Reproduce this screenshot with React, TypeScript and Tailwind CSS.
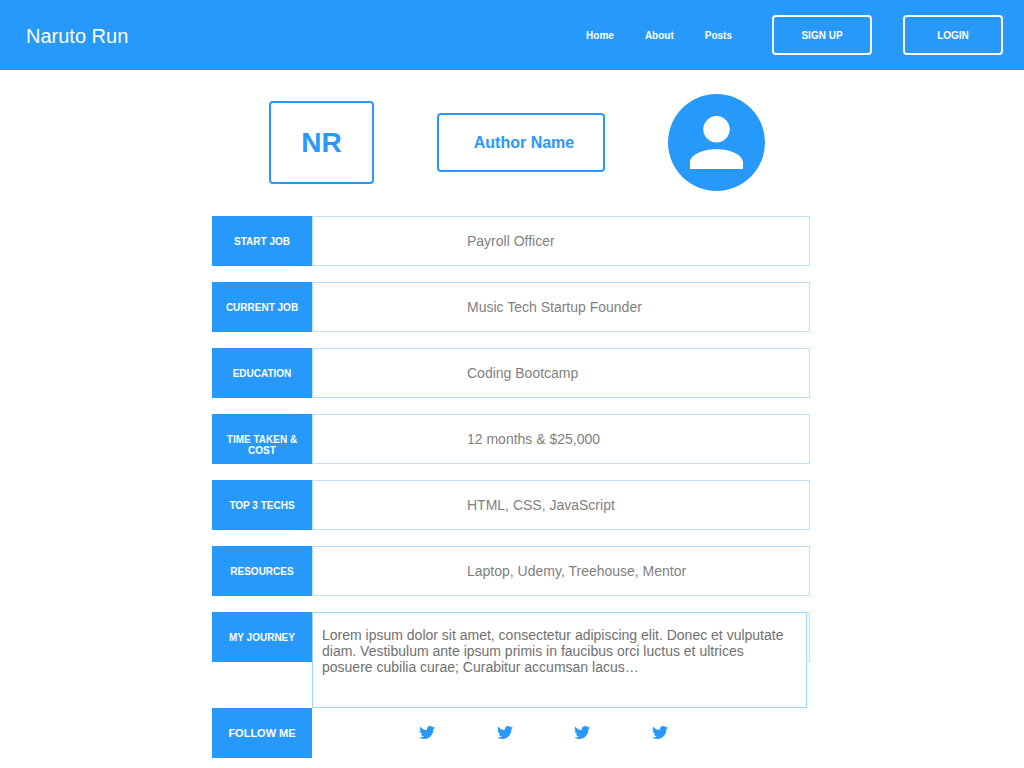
import React from "react";

type Field = { label: string; value: string };

const fields: Field[] = [
  { label: "START JOB", value: "Payroll Officer" },
  { label: "CURRENT JOB", value: "Music Tech Startup Founder" },
  { label: "EDUCATION", value: "Coding Bootcamp" },
  { label: "TIME TAKEN & COST", value: "12 months & $25,000" },
  { label: "TOP 3 TECHS", value: "HTML, CSS, JavaScript" },
  { label: "RESOURCES", value: "Laptop, Udemy, Treehouse, Mentor" },
];

const links = ["Home", "About", "Posts"];

function Header() {
  return (
    <header className="flex h-[70px] items-center justify-between bg-[#2699fb] pr-[21px] pl-[26px] text-white">
      <a href="#" className="pt-0.5 text-xl leading-6">
        Naruto Run
      </a>
      <div className="flex items-center gap-10 text-[10px] leading-3 font-bold">
        <nav className="flex gap-[31px] pt-0.5">
          {links.map((link) => (
            <a key={link} href="#">
              {link}
            </a>
          ))}
        </nav>
        <div className="flex gap-[31px]">
          <button type="button" className="h-10 w-[100px] rounded border-2 border-white pt-0.5">
            SIGN UP
          </button>
          <button type="button" className="h-10 w-[100px] rounded border-2 border-white pt-0.5">
            LOGIN
          </button>
        </div>
      </div>
    </header>
  );
}

function Intro() {
  return (
    <section className="flex items-center gap-[63px] pl-[57px] font-bold text-[#2699fb]">
      <div className="flex h-[83px] w-[105px] items-center justify-center rounded border-2 border-[#2699fb] text-[28px] leading-8">
        NR
      </div>
      <h1 className="flex h-[59px] w-[168px] items-center justify-center rounded border-2 border-[#2699fb] pl-1.5 text-base">
        Author Name
      </h1>
      <div className="flex size-[97px] items-center justify-center rounded-full bg-[#2699fb]">
        <svg viewBox="4 4 16 16" className="size-[53px] fill-white" role="img" aria-label="Author">
          <path d="M12 4a4 4 0 0 1 4 4 4 4 0 0 1-4 4 4 4 0 0 1-4-4 4 4 0 0 1 4-4m0 10c4.42 0 8 1.79 8 4v2H4v-2c0-2.21 3.58-4 8-4z" />
        </svg>
      </div>
    </section>
  );
}

function TwitterIcon() {
  return (
    <svg viewBox="1.5 4 21 17" className="h-[13px] w-4 fill-[#2699fb]" aria-hidden="true">
      <path d="M22.46 6c-.77.35-1.6.58-2.46.69.88-.53 1.56-1.37 1.88-2.38-.83.5-1.75.85-2.72 1.05C18.37 4.5 17.26 4 16 4c-2.35 0-4.27 1.92-4.27 4.29 0 .34.04.67.11.98C8.28 9.09 5.11 7.38 3 4.79c-.37.63-.58 1.37-.58 2.15 0 1.49.75 2.81 1.91 3.56-.71 0-1.37-.2-1.95-.5v.03c0 2.08 1.48 3.82 3.44 4.21a4.22 4.22 0 0 1-1.93.07 4.28 4.28 0 0 0 4 2.98 8.521 8.521 0 0 1-5.33 1.84c-.34 0-.68-.02-1.02-.06C3.44 20.29 5.7 21 8.12 21 16 21 20.33 14.46 20.33 8.79c0-.19 0-.37-.01-.56.84-.6 1.56-1.36 2.14-2.23z" />
    </svg>
  );
}

function Label({ children }: { children: React.ReactNode }) {
  return (
    <dt className="h-[50px] w-[100px] shrink-0 bg-[#2699fb] px-3 pt-5 text-center text-[10px] leading-[11px] font-bold text-white">
      {children}
    </dt>
  );
}

export default function App() {
  return (
    <div className="min-h-screen bg-white font-['Liberation_Sans',Arial,sans-serif]">
      <Header />
      <main className="mx-auto max-w-[600px] pt-6 pr-0.5 pb-2.5">
        <Intro />
        <dl className="mt-[25px] flex flex-col gap-4">
          {fields.map((field) => (
            <div key={field.label} className="flex">
              <Label>{field.label}</Label>
              <dd className="flex flex-1 items-center border border-[#bce0fd] pl-[154px] text-sm text-[#7f7f7f]">
                {field.value}
              </dd>
            </div>
          ))}
          <div className="flex">
            <Label>MY JOURNEY</Label>
            <dd className="grid flex-1">
              <div className="col-start-1 row-start-1 h-[50px] border border-[#bce0fd]" />
              <p className="col-start-1 row-start-1 mr-[3px] min-h-24 border border-[#9bd9f7] bg-white px-[9px] pt-3.5 text-sm leading-4 text-[#707070]">
                Lorem ipsum dolor sit amet, consectetur adipiscing elit. Donec et vulputate diam.
                Vestibulum ante ipsum primis in faucibus orci luctus et ultrices posuere cubilia
                curae; Curabitur accumsan lacus…
              </p>
            </dd>
          </div>
        </dl>
        <section className="flex items-center gap-[107px]">
          <h2 className="flex h-[50px] w-[100px] items-center justify-center bg-[#2699fb] text-[11px] leading-3 font-bold text-white">
            FOLLOW ME
          </h2>
          <div className="flex w-[249px] justify-between pb-px">
            {[1, 2, 3, 4].map((n) => (
              <a key={n} href="#" aria-label="Twitter">
                <TwitterIcon />
              </a>
            ))}
          </div>
        </section>
      </main>
    </div>
  );
}
